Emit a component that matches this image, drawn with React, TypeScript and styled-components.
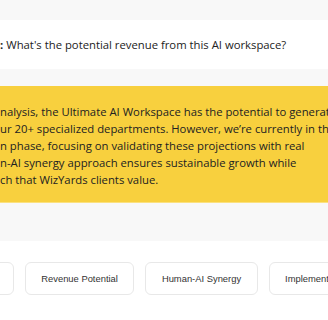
import styled, { createGlobalStyle } from 'styled-components'

const GlobalStyle = createGlobalStyle`
  html, body {
    margin: 0;
    padding: 0;
    background: #f8f8f8;
    overflow: hidden;
  }
`

const answerLines = [
  'nalysis, the Ultimate AI Workspace has the potential to generate',
  'ur 20+ specialized departments. However, we\u2019re currently in the',
  'n phase, focusing on validating these projections with real',
  'n-AI synergy approach ensures sustainable growth while',
  'ch that WizYards clients value.',
]

const suggestions = [
  'Key Features',
  'Revenue Potential',
  'Human-AI Synergy',
  'Implementation Timeline',
]

export default function App() {
  return (
    <>
      <GlobalStyle />
      <Page>
        <Thread>
          <Question>
            <Speaker>:</Speaker>
            What's the potential revenue from this AI workspace?
          </Question>
          <Answer>
            {answerLines.map((line) => (
              <AnswerLine key={line}>{line}</AnswerLine>
            ))}
          </Answer>
        </Thread>
        <Suggestions>
          <SuggestionRow>
            {suggestions.map((s) => (
              <Suggestion key={s}>{s}</Suggestion>
            ))}
          </SuggestionRow>
        </Suggestions>
      </Page>
    </>
  )
}

const Page = styled.div`
  width: 328px;
  height: 320px;
  overflow: hidden;
  display: flex;
  flex-direction: column;
  font-family: 'Open Sans', 'DejaVu Sans', sans-serif;
  color: #222;
`

const Thread = styled.div`
  display: flex;
  flex-direction: column;
  gap: 17px;
  padding: 20px 0 38px;
`

const Question = styled.div`
  height: 49px;
  display: flex;
  align-items: center;
  gap: 3px;
  background: #fff;
  font-size: 11.3px;
  white-space: nowrap;
`

const Speaker = styled.strong`
  font-weight: 700;
`

const Answer = styled.div`
  background: #f8d03e;
  border-bottom: 1px solid #fbe17f;
  padding: 17px 0 14px;
  font-size: 11.3px;
  line-height: 17px;
`

const AnswerLine = styled.div`
  white-space: nowrap;
`

const Suggestions = styled.div`
  flex: 1;
  background: #fff;
  padding-top: 21px;
`

const SuggestionRow = styled.div`
  display: flex;
  gap: 11px;
  margin-left: -75px;
`

const Suggestion = styled.button`
  flex-shrink: 0;
  height: 33px;
  padding: 0 15.5px;
  border: 1px solid #e8e8e8;
  border-radius: 6px;
  background: #fff;
  font-family: 'Liberation Sans', Arial, sans-serif;
  font-size: 9.4px;
  color: #333;
  white-space: nowrap;
`
